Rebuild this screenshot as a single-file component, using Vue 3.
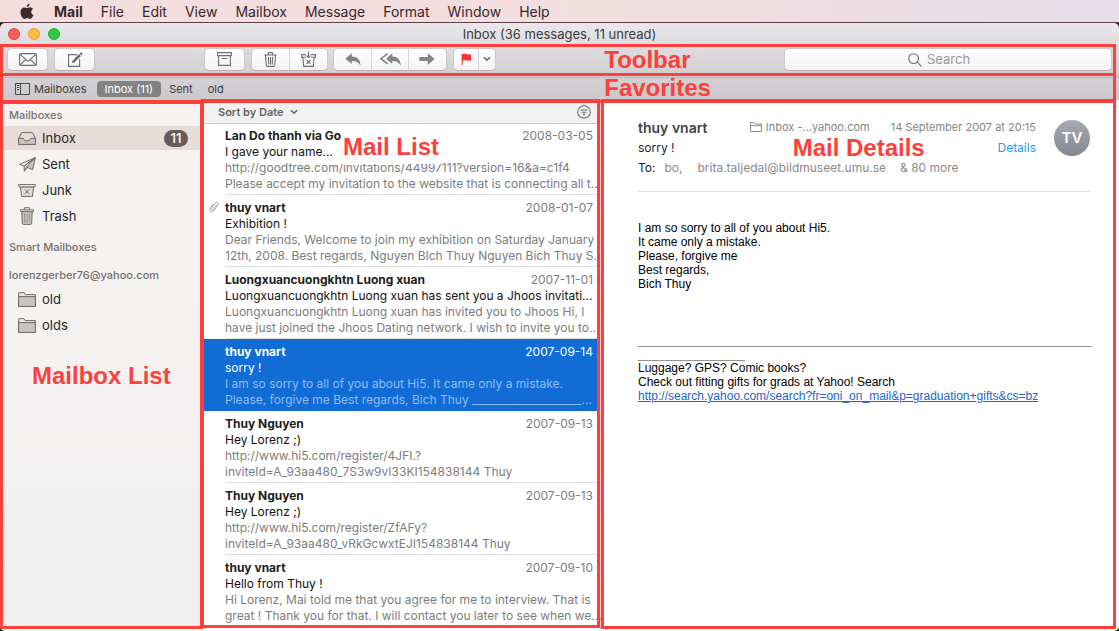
<script setup>
import { ref } from 'vue'

const menus = ['Mail', 'File', 'Edit', 'View', 'Mailbox', 'Message', 'Format', 'Window', 'Help']
const favorites = ['Inbox (11)', 'Sent', 'old']
const mailboxes = [
  { name: 'Inbox', icon: 'inbox', count: 11 },
  { name: 'Sent', icon: 'sent' },
  { name: 'Junk', icon: 'junk' },
  { name: 'Trash', icon: 'trash' }
]
const folders = ['old', 'olds']
const messages = [
  { from: 'Lan Do thanh via Go', date: '2008-03-05', subject: 'I gave your name...', lines: ['http://goodtree.com/invitations/44997111?version=16&a=c1f4', 'Please accept my invitation to the website that is connecting all t...'] },
  { from: 'thuy vnart', date: '2008-01-07', subject: 'Exhibition !', clip: true, lines: ['Dear Friends, Welcome to join my exhibition on Saturday January', '12th, 2008. Best regards, Nguyen BIch Thuy Nguyen Bich Thuy S...'] },
  { from: 'Luongxuancuongkhtn Luong xuan', date: '2007-11-01', subject: 'Luongxuancuongkhtn Luong xuan has sent you a Jhoos invitati...', lines: ['Luongxuancuongkhtn Luong xuan has invited you to Jhoos Hi, I', 'have just joined the Jhoos Dating network. I wish to invite you to...'] },
  { from: 'thuy vnart', date: '2007-09-14', subject: 'sorry !', lines: ['I am so sorry to all of you about Hi5. It came only a mistake.', 'Please, forgive me Best regards, Bich Thuy ____________________...'] },
  { from: 'Thuy Nguyen', date: '2007-09-13', subject: 'Hey Lorenz ;)', lines: ['http://www.hi5.com/register/4JFI.?', 'inviteId=A_93aa480_7S3w9vI33KI154838144 Thuy'] },
  { from: 'Thuy Nguyen', date: '2007-09-13', subject: 'Hey Lorenz ;)', lines: ['http://www.hi5.com/register/ZfAFy?', 'inviteId=A_93aa480_vRkGcwxtEJI154838144 Thuy'] },
  { from: 'thuy vnart', date: '2007-09-10', subject: 'Hello from Thuy !', lines: ['Hi Lorenz, Mai told me that you agree for me to interview. That is', 'great ! Thank you for that. I will contact you later to see when we...'] }
]
const selected = ref(3)
const query = ref('')
const rule = '_'.repeat(84)
</script>

<template>
  <div class="desktop">
    <nav class="menubar" aria-label="Menu bar">
      <button class="apple" aria-label="Apple">
        <svg width="14" height="17" viewBox="0 0 14 17" fill="#3f2b2e"><path d="M9.6 0.6C9.7 2.6 8.2 4.2 6.7 4.1C6.5 2.400 8 0.800 9.600 0.600ZM6.900 5.100C7.600 5.100 8.500 4.300 9.900 4.300C11.200 4.300 12.400 5 13 6C10.400 7.500 10.800 11 13.500 12C12.900 13.700 11.500 16 10.100 16C9 16 8.700 15.300 7.300 15.300C5.900 15.300 5.500 16 4.500 16C2.700 16 0.500 12.500 0.500 9.300C0.500 6.200 2.400 4.500 4.300 4.500C5.500 4.500 6.300 5.100 6.900 5.100Z"/></svg>
      </button>
      <button v-for="m in menus" :key="m">{{ m }}</button>
    </nav>

    <div class="window">
      <header class="titlebar">
        <div class="lights">
          <button class="light close" aria-label="Close"></button>
          <button class="light minimize" aria-label="Minimize"></button>
          <button class="light expand" aria-label="Zoom"></button>
        </div>
        <h1>Inbox (36 messages, 11 unread)</h1>
      </header>

      <div class="toolbar">
        <button class="tool" aria-label="Get mail">
          <svg width="18" height="13" viewBox="0 0 18 13" class="line"><rect x=".6" y=".6" width="16.800" height="11.800" rx="1.200"/><path d="M1 1.200l6.800 6.300q1.200 1 2.400 0L17 1.200M1 12l5.600-5.300M17 12l-5.600-5.300"/></svg>
        </button>
        <button class="tool compose" aria-label="Compose">
          <svg width="16" height="15" viewBox="0 0 16 15"><path class="ol" d="M10 2.600H1.600v11.800h11V7"/><path d="M4.800 11.200l.9-2.800L12 2.100l1.900 1.900-6.300 6.300zM12.600 1.500l.9-.9q.5-.4 1 0l.9.900q.4.500 0 1l-.9.900z" fill="#6b6b6b"/></svg>
        </button>
        <button class="tool archive" aria-label="Archive">
          <svg width="15" height="14" viewBox="0 0 15 14" class="line"><path d="M.6.600h13.800v3H.6zM1.600 3.600v9.800h11.800V3.600M4.600 6.500h5.800"/></svg>
        </button>
        <div class="group trashes">
          <button aria-label="Delete">
            <svg width="13" height="15" viewBox="0 0 13 15" class="line"><path d="M.3 3h12.400M4.300 2.800V1.200q0-.6.600-.6h3.200q.6 0 .6.600v1.600M1.500 3.200l.7 10q.1 1.200 1.200 1.200h6.200q1.100 0 1.200-1.200l.7-10M4.500 5l.2 7.500M6.500 5v7.500M8.500 5l-.2 7.500"/></svg>
          </button>
          <button aria-label="Junk">
            <svg width="15" height="16" viewBox="0 0 15 16" class="line"><path d="M5 3.600H.6v2.600h1.300l.8 9.200h9.600l.8-9.200h1.300V3.600H10M7.500.500v5.800M5.500 4.500l2 2 2-2M2 6.200h3M10 6.200h3M5.500 8.800l4 4M9.500 8.800l-4 4"/></svg>
          </button>
        </div>
        <div class="group replies">
          <button aria-label="Reply">
            <svg width="16" height="13" viewBox="0 0 16 13" fill="#858585"><path d="M6.800.300v3.200c5.300 0 8.500 3 8.700 9-1.900-3.200-4.400-4.600-8.700-4.600v3.200L.3 5.700z"/></svg>
          </button>
          <button aria-label="Reply all">
            <svg width="21" height="13" viewBox="0 0 21 13" fill="#858585"><path d="M12.300.300v3.200c5 0 8.200 3 8.400 9-1.900-3.200-4.400-4.600-8.400-4.600v3.200L6 5.700z"/><path d="M7.600.6L1 5.700l6.600 5.100" fill="none" stroke="#858585" stroke-width="1.600"/></svg>
          </button>
          <button aria-label="Forward">
            <svg width="16" height="12" viewBox="0 0 16 12" fill="#858585"><path d="M.3 3.900h8.500V.3L15.700 6l-6.900 5.700V8H.3z"/></svg>
          </button>
        </div>
        <div class="group flags">
          <button aria-label="Flag">
            <svg width="11" height="12" viewBox="0 0 11 12" fill="#fc2f31"><path d="M.5 1.300Q3 .2 5.500 1q2 .9 5 .3-1.200 3 0 6Q8 8.200 5.500 7.300 3.500 6.600 1.700 7.500v4.200H.6z"/></svg>
          </button>
          <button aria-label="Flag options">
            <svg width="8" height="6" viewBox="0 0 8 6" class="chev"><path d="M1 1.200l3 3 3-3"/></svg>
          </button>
        </div>
        <label class="search">
          <svg width="14" height="14" viewBox="0 0 14 14" class="line"><circle cx="5.600" cy="5.600" r="4.900"/><path d="M9.200 9.200l4.200 4.200"/></svg>
          <input v-model="query" type="search" placeholder="Search" aria-label="Search">
        </label>
        <div class="mark" aria-hidden="true"></div>
        <strong class="note">Toolbar</strong>
      </div>

      <nav class="favorites" aria-label="Favorites">
        <button class="show">
          <svg width="15" height="12" viewBox="0 0 15 12" fill="none" stroke="#4a4a4a"><path d="M.5.500h14v11H.5zM5.500.500v11M2 2.500h2M2 4.500h2M2 6.500h2"/></svg>
          Mailboxes
        </button>
        <button v-for="(f, i) in favorites" :key="f" :class="{ active: i === 0 }">{{ f }}</button>
        <div class="mark" aria-hidden="true"></div>
        <strong class="note">Favorites</strong>
      </nav>

      <main class="panes">
        <aside class="sidebar">
          <h2>Mailboxes</h2>
          <ul>
            <li v-for="(b, i) in mailboxes" :key="b.name">
              <button :class="{ current: i === 0 }">
                <span class="icon">
                  <svg v-if="b.icon === 'inbox'" width="18" height="13" viewBox="0 0 18 13" class="side"><path d="M.6 6.300L3.600.600h10.800l3 5.700v6.100H.6z" fill="none"/><path d="M.6 6.300h4.600q.7 2.700 3.800 2.700t3.800-2.700h4.600v6.100H.6z"/></svg>
                  <svg v-else-if="b.icon === 'sent'" width="17" height="15" viewBox="0 0 17 15" class="side"><path d="M16.300.700L.7 7.300l4.500 1.800z" fill="none"/><path d="M16.300.700L7.500 10l6.200 2.700z"/><path d="M5.200 9.100v5l2.300-4.100M5.200 14.100l3.600-3.400M5.200 9.100L16.300.700" fill="none"/></svg>
                  <svg v-else-if="b.icon === 'junk'" width="18" height="13" viewBox="0 0 18 13" class="side"><path d="M.6.600h16.800l-.5 2.500H1.100z" fill="none"/><path d="M2.400 3.100h13.200l-1.200 9.300H3.600z" fill="#e0dcda"/><path d="M6.800 5.500l4.400 4.400M11.200 5.500L6.800 9.900"/></svg>
                  <svg v-else width="14" height="18" viewBox="0 0 14 18" class="side"><path d="M.6 2.800h12.800v1.800H.6zM4 2.600L4.600.700h4.800l.6 1.900" fill="none"/><path d="M1.800 4.600h10.400l-.5 11.600q-.1 1.200-1.200 1.200h-7q-1.100 0-1.200-1.200z"/><path d="M4.500 6.500l.2 9M7 6.500v9M9.500 6.500l-.2 9" stroke="#928c8b"/></svg>
                </span>
                {{ b.name }}
                <span v-if="b.count" class="badge">{{ b.count }}</span>
              </button>
            </li>
          </ul>
          <h2 class="smart">Smart Mailboxes</h2>
          <h2 class="account">lorenzgerber76@yahoo.com</h2>
          <ul>
            <li v-for="f in folders" :key="f">
              <button>
                <span class="icon">
                  <svg width="18" height="15" viewBox="0 0 18 15" class="side"><path d="M.6 14.400V1.300q0-.7.700-.7h4.500l1.400 2h10.200v11.800z" fill="#e6e3e2"/><path d="M.6 4.600h16.800v9.800H.6z"/></svg>
                </span>
                {{ f }}
              </button>
            </li>
          </ul>
          <div class="mark" aria-hidden="true"></div>
          <strong class="note">Mailbox List</strong>
        </aside>

        <section class="list">
          <div class="sortbar">
            <button class="sort">Sort by Date
              <svg width="8" height="6" viewBox="0 0 8 6" class="chev"><path d="M1 1.200l3 3 3-3"/></svg>
            </button>
            <button aria-label="Filter">
              <svg width="14" height="14" viewBox="0 0 14 14" class="line"><circle cx="7" cy="7" r="6.300"/><path d="M3.500 5h7M4.500 7.200h5M5.800 9.400h2.400"/></svg>
            </button>
          </div>
          <ul>
            <li v-for="(m, i) in messages" :key="i">
              <button class="message" :class="{ selected: i === selected }" @click="selected = i">
                <svg v-if="m.clip" class="clip" width="10" height="12" viewBox="0 0 10 12" fill="none" stroke="#a8a8a8"><path d="M7.600 3.800L4 8.700Q3.200 9.500 2.500 9q-.7-.6 0-1.600L6.300 2q1.200-1.300 2.400-.4 1.100 1 .2 2.400L4.700 10q-1.500 1.900-3.200.8-1.700-1.300-.4-3.300l3-4.200"/></svg>
                <span class="top"><b>{{ m.from }}</b><time>{{ m.date }}</time></span>
                <span class="subject">{{ m.subject }}</span>
                <span v-for="l in m.lines" :key="l" class="preview">{{ l }}</span>
              </button>
            </li>
          </ul>
          <div class="mark" aria-hidden="true"></div>
          <strong class="note">Mail List</strong>
        </section>

        <article class="details">
          <header>
            <div class="info">
              <div class="row">
                <h2>thuy vnart</h2>
                <span class="where">
                  <svg width="12" height="10" viewBox="0 0 12 10" fill="none" stroke="#8a8a8a"><path d="M.5 9.500v-9h3.700l1 1.500h6.300v7.500zM.5 3.700h11"/></svg>
                  Inbox -...yahoo.com
                </span>
                <time>14 September 2007 at 20:15</time>
              </div>
              <div class="row">
                <p>sorry !</p>
                <a href="#">Details</a>
              </div>
              <p class="to"><span>To:</span><span>bo,</span><span>brita.taljedal@bildmuseet.umu.se</span><span>&amp; 80 more</span></p>
            </div>
            <div class="avatar">TV</div>
          </header>
          <div class="body">
            <p>I am so sorry to all of you about Hi5.<br>It came only a mistake.<br>Please, forgive me<br>Best regards,<br>Bich Thuy</p>
            <p class="rule">{{ rule }}</p>
            <p>Luggage? GPS? Comic books?<br>Check out fitting gifts for grads at Yahoo! Search<br><a href="#">http://search.yahoo.com/search?fr=oni_on_mail&amp;p=graduation+gifts&amp;cs=bz</a></p>
          </div>
          <div class="mark" aria-hidden="true"></div>
          <strong class="note">Mail Details</strong>
        </article>
      </main>
    </div>
  </div>
</template>

<style>
html, body, #app { height: 100%; }
body { margin: 0; background: #1b191c; overflow: hidden; }
</style>

<style scoped>
* { box-sizing: border-box; }
.desktop {
  display: flex;
  flex-direction: column;
  height: 100vh;
  font-family: Inter, "Liberation Sans", sans-serif;
  font-size: 12px;
  color: #262626;
}
button {
  font: inherit;
  color: inherit;
  background: none;
  border: 0;
  padding: 0;
  margin: 0;
  text-align: left;
}
h1, h2, p, ul { margin: 0; padding: 0; }
ul { list-style: none; }
svg { display: block; flex: none; }
a { text-decoration: none; }
.line, .ol { fill: none; stroke: #6f6f6f; stroke-width: 1.1; }
.chev { fill: none; stroke: #666; stroke-width: 1.6; }

.menubar {
  flex: none;
  display: flex;
  align-items: center;
  gap: 18px;
  height: 23px;
  padding-left: 20px;
  border-bottom: 1px solid #59404a;
  background: linear-gradient(90deg, #f5dddd, #f2dee0 60%, #e6dde7);
  color: #3a2729;
  font-size: 14px;
}
.menubar button:nth-child(2) { font-weight: 700; }
.apple { margin-right: 2px; }

.window {
  flex: 1;
  min-height: 0;
  display: flex;
  flex-direction: column;
  border-radius: 5px;
  overflow: hidden;
  background: linear-gradient(#e9e7e9, #d0ced1 54px, #fff 80px);
  padding-bottom: 2px;
}
.titlebar {
  flex: none;
  position: relative;
  display: flex;
  align-items: center;
  justify-content: center;
  height: 21px;
}
.titlebar h1 { font-size: 13px; font-weight: 400; color: #3c3c3c; }
.lights { position: absolute; left: 8px; top: 5px; display: flex; gap: 8px; }
.light { width: 12px; height: 12px; border: 1px solid; border-radius: 50%; }
.close { background: #fc5b57; border-color: #e2443f; }
.minimize { background: #fdbc40; border-color: #dfa033; }
.expand { background: #33c748; border-color: #25ab36; }

.toolbar {
  flex: none;
  position: relative;
  display: flex;
  align-items: center;
  height: 29px;
  padding: 1px 7px 0;
}
.tool, .group, .search {
  height: 23px;
  background: linear-gradient(#fff, #f3f3f3);
  border: 1px solid #cbc9cb;
  border-bottom-color: #b4b2b4;
  border-radius: 5px;
}
.tool { width: 41px; display: flex; align-items: center; justify-content: center; }
.compose { margin-left: 6px; }
.archive { margin-left: 109px; }
.group { display: flex; }
.group button { flex: 1; display: flex; align-items: center; justify-content: center; }
.group button + button { border-left: 1px solid #d5d5d5; }
.trashes { width: 77px; margin-left: 6px; }
.replies { width: 114px; margin-left: 5px; }
.replies button { flex: 38; }
.replies button:nth-child(2) { flex: 36; }
.flags { width: 43px; margin-left: 6px; }
.flags button:last-child { flex: none; width: 17px; }
.search { position: relative; width: 328px; margin-left: auto; }
.search svg { position: absolute; left: calc(50% - 40px); top: 4px; }
.search input {
  width: 100%;
  height: 100%;
  padding: 0 8px 0 calc(50% - 21px);
  border: 0;
  outline: 0;
  background: none;
  font: inherit;
  font-size: 13px;
}
.search input::placeholder { color: #9a9a9a; opacity: 1; }

.favorites {
  flex: none;
  position: relative;
  display: flex;
  align-items: center;
  height: 27px;
  padding: 5px 15px 0;
  color: #3d3d3d;
  font-size: 11px;
  background: linear-gradient(transparent 4px, #bab8ba 4px, #bab8ba 5px, #d2d0d2 5px, #cbc9cb);
}
.show { display: flex; align-items: center; gap: 4px; }
.favorites .active {
  margin: 0 8px 0 10px;
  padding: 0 8px;
  line-height: 16px;
  border-radius: 4px;
  background: #838183;
  color: #fff;
}
.favorites button:nth-of-type(4) { margin-left: 15px; }

.panes {
  flex: 1;
  min-height: 0;
  display: grid;
  grid-template-columns: 201px 400px minmax(0, 1fr);
}
.sidebar, .list, .details { position: relative; min-width: 0; }

.sidebar {
  padding-top: 7px;
  background: linear-gradient(#f6f2f0, #f4f2f1 50%, #efeff0);
  font-size: 13px;
}
.sidebar h2 { padding-left: 9px; font-size: 11px; line-height: 16px; font-weight: 500; color: #767170; }
.sidebar ul { padding-top: 3px; }
.sidebar li button { display: flex; align-items: center; width: 100%; height: 26px; padding: 0 13px 0 18px; }
.icon { width: 18px; margin-right: 6px; display: flex; justify-content: center; }
.side { fill: #c9c4c3; stroke: #6f6968; stroke-width: 1; stroke-linejoin: round; }
.sidebar .current { background: #e8dcd9; height: 24px; margin-bottom: 1px; }
.badge {
  margin-left: auto;
  width: 24px;
  line-height: 17px;
  border-radius: 9px;
  background: #685c5a;
  color: #f3ecea;
  font-weight: 600;
  text-align: center;
}
.sidebar .smart { margin-top: 10px; }
.sidebar .account { margin-top: 12px; }

.list { background: #fff; border-right: 1px solid #d4d4d4; }
.sortbar {
  display: flex;
  justify-content: space-between;
  align-items: center;
  height: 23px;
  padding: 1px 9px 0 17px;
  background: #f1f1f1;
  box-shadow: 0 1px #c9c9c9;
  color: #646464;
  font-weight: 600;
  font-size: 11px;
}
.sort { display: flex; align-items: center; gap: 6px; }
.message {
  position: relative;
  display: block;
  width: 100%;
  height: 72px;
  padding: 2px 7px 0 24px;
  line-height: 16px;
  white-space: nowrap;
}
.message::after {
  content: "";
  position: absolute;
  left: 25px;
  right: 0;
  bottom: 0;
  border-bottom: 1px solid #dedede;
}
.message span { display: block; }
.message .top { display: flex; justify-content: space-between; }
.message b { font-weight: 700; color: #1c1c1c; }
.message time, .preview { color: #7d7d7d; }
.subject { color: #111; }
.selected { background: #116cd6; }
.selected::after { content: none; }
.selected b, .selected time, .selected .subject { color: #fff; }
.selected .preview { color: #8fbcf2; }
.clip { position: absolute; left: 8px; top: 6px; }

.details { background: #fff; padding: 17px 29px 0 37px; }
.details header { display: flex; gap: 18px; height: 75px; border-bottom: 1px solid #dcdcdc; }
.info { flex: 1; min-width: 0; }
.row { display: flex; align-items: center; height: 20px; }
.row h2 { flex: 1; font-size: 14px; font-weight: 600; color: #444; }
.row p { flex: 1; }
.where { display: flex; align-items: center; gap: 4px; margin-right: 21px; }
.where, .row time { font-size: 11px; color: #858585; }
.row a { color: #1a9ff0; }
.to { display: flex; line-height: 22px; color: #8a8a8a; }
.to span:nth-child(1) { color: #1c1c1c; margin-right: 9px; }
.to span:nth-child(2) { margin-right: 15px; }
.to span:nth-child(3) { margin-right: 14px; }
.avatar {
  width: 36px;
  height: 36px;
  margin-top: 3px;
  border-radius: 50%;
  background: linear-gradient(#a4a8b4, #858993);
  color: #fff;
  font-size: 15px;
  font-weight: 600;
  line-height: 36px;
  text-align: center;
}
.body {
  margin-right: -3px;
  padding-top: 29px;
  font-family: "Liberation Sans", Arial, sans-serif;
  font-size: 12px;
  line-height: 14px;
  color: #000;
}
.body a { color: #1b66c9; text-decoration: underline; }
.rule { padding-top: 42px; overflow-wrap: anywhere; color: #888; }

.mark {
  position: absolute;
  border: 3px solid #ff3f3b;
  pointer-events: none;
  z-index: 1;
}
.toolbar .mark, .favorites .mark { inset: 0 3px -3px 0; }
.sidebar .mark { inset: 1px -2px 0 0; }
.list .mark { inset: -1px 0 1px; }
.details .mark { inset: -1px 3px 0 0; }
.note {
  position: absolute;
  z-index: 2;
  font-family: "Liberation Sans", Arial, sans-serif;
  font-size: 24px;
  line-height: 28px;
  white-space: nowrap;
  color: #ff3f3b;
  pointer-events: none;
}
.toolbar .note { left: 54%; top: 2px; }
.favorites .note { left: 54%; top: 1px; }
.sidebar .note { left: 32px; top: 262px; }
.list .note { left: 140px; top: 29px; padding: 4px 2px 3px; background: #fff; }
.details .note { left: 37%; top: 34px; }
</style>
